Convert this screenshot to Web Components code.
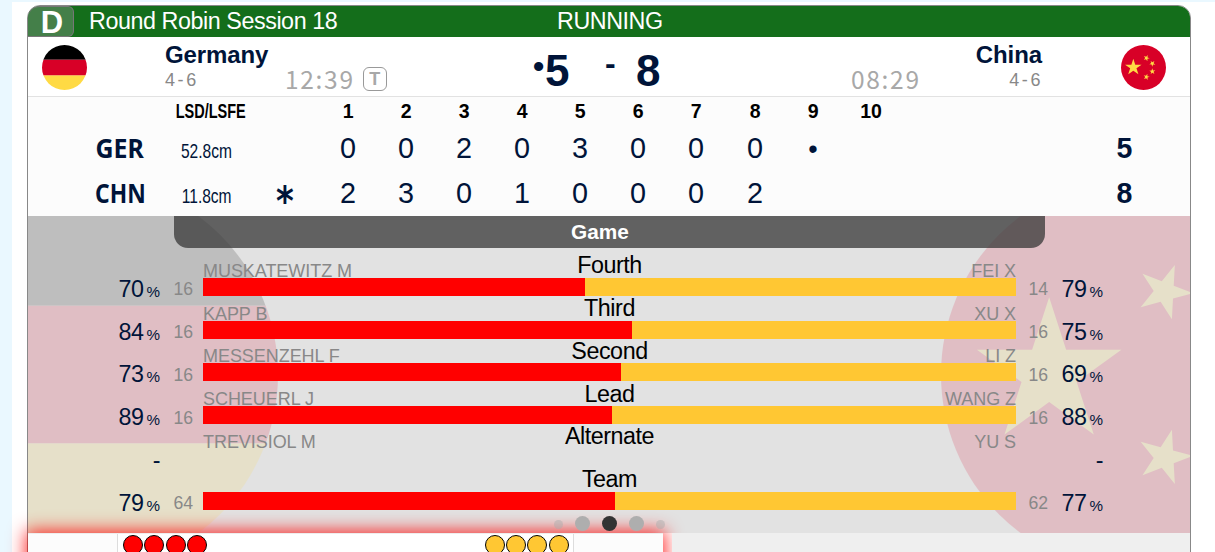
<!DOCTYPE html>
<html lang="en">
<head>
<meta charset="utf-8">
<title>Scoreboard</title>
<style>
  body { margin:0; height:552px; overflow:hidden; background:#eaf8ff; font-family:"Liberation Sans",Arial,sans-serif; color:#001439; }
</style>
</head>
<body>
<score-board>
  <session-bar slot="bar" sheet="D" state="RUNNING">Round Robin Session 18</session-bar>
  <match-head slot="head"></match-head>
  <line-score slot="ends"></line-score>
  <game-stats slot="stats"></game-stats>
  <stone-panel slot="stones"></stone-panel>
</score-board>
<script>
class BaseElement extends HTMLElement {
  constructor() {
    super();
    this.attachShadow({mode:"open"});
  }
  render(html) {
    const template = document.createElement('template');
    template.innerHTML = html;
    this.shadowRoot.replaceChildren(template.content.cloneNode(true));
  }
}

class ScoreBoard extends BaseElement {
  connectedCallback() {
    this.render(`
      <style>
        :host { display:block; padding:2px 0 0 12px; }
        .page { background:#fff; padding:3px 0 0 15px; height:547px; }
        .card { width:1162px; height:560px; border:1px solid #888; border-radius:13px 13px 0 0; background:#fff; }
      </style>
      <div class="page"><div class="card">
        <slot name="bar"></slot>
        <slot name="head"></slot>
        <slot name="ends"></slot>
        <slot name="stats"></slot>
        <slot name="stones"></slot>
      </div></div>`);
  }
}

class SessionBar extends BaseElement {
  connectedCallback() {
    this.render(`
      <style>
        :host { display:grid; grid-template-columns:46px 483px 1fr; height:31px; background:#146e1b;
          color:#fff; font-size:23.300px; letter-spacing:-.430px; line-height:30px; border-radius:12px 12px 0 0; }
        .sheet { box-sizing:border-box; height:31px; background:#447f49; border:1px solid #777; border-left:0; border-radius:12px 6px 6px 0;
          text-align:center; font-weight:bold; font-size:31px; letter-spacing:0; line-height:31px; padding-left:3px; }
        .name { padding-left:15px; }
      </style>
      <div class="sheet">${this.getAttribute("sheet")}</div>
      <div class="name"><slot></slot></div>
      <div>${this.getAttribute("state")}</div>`);
  }
}

class RoundFlag extends BaseElement {
  static shapes = {
    ger:`<path fill="#ffda44" d="M0 345h512v167H0z"/><path d="M0 0h512v167H0z"/><path fill="#d80027" d="M0 167h512v178H0z"/>`,
    chn:`<path fill="#d80027" d="M0 0h512v512H0z"/>
      <g fill="#ffda44">
        <path d="M140.2 155.8l22 68h71.6l-57.9 42 22.1 68-57.8-42-57.9 42 22.1-68-57.8-42h71.5z"/>
        <path d="M303.1 397.8l-16.9-20.8-25 9.6 14.5-22.5-16.9-20.8 25.9 6.9 14.6-22.5 1.4 26.8 25.9 6.9-25 9.7z"/>
        <path d="M303.1 114.2l-16.9 20.8-25-9.6 14.5 22.5-16.9 20.8 25.9-6.9 14.6 22.5 1.4-26.8 25.9-6.9-25-9.7z"/>
        <path d="M322.2 220.3L348.2 221.9 355.1 247 364.6 222.7 390.6 223.9 370.5 207.4 379.7 183 357.7 197 337.4 180.8 343.9 206z"/>
        <path d="M322.2 291.7L348.2 290.1 355.1 265 364.6 289.3 390.6 288.1 370.5 304.6 379.7 329 357.7 315 337.4 331.2 343.9 306z"/>
      </g>`
  }
  connectedCallback() {
    this.render(`
      <style>
        :host { display:block; }
        svg { display:block; width:100%; height:100%; border-radius:50%; }
      </style>
      <svg viewBox="0 0 512 512">${RoundFlag.shapes[this.getAttribute("team")]}</svg>`);
  }
}

class MatchHead extends BaseElement {
  connectedCallback() {
    this.render(`
      <style>
        :host { display:grid; grid-template-columns:137px 120px 229px 166px 170px 193px 1fr; height:59px; border-bottom:1px solid #e2e2e2; }
        round-flag { width:45px; height:45px; margin:8px 0 0 14px; }
        .right round-flag { margin-left:78px; }
        .name { font-weight:bold; font-size:24px; letter-spacing:-.1px; line-height:26px; padding-top:5px; white-space:nowrap; }
        .rec { font-size:18px; letter-spacing:2.600px; color:#888; line-height:20px; padding-top:2px; }
        .away { text-align:right; }
        .away .name { padding-right:1px; }
        .clock { display:flex; align-items:center; gap:8px; padding-top:26px; height:31px; font:24.500px/31px "Noto Sans CJK JP",sans-serif; letter-spacing:1.700px; color:#a8a8a8; }
        .clock i { box-sizing:border-box; width:24px; height:24px; border:1px solid #999; border-radius:6px; margin-top:1px;
          font:bold 18px/23px "Liberation Sans",sans-serif; letter-spacing:0; text-align:center; }
        .score { display:flex; padding-top:9px; font-weight:bold; font-size:44px; line-height:50px; }
        .score b:first-child { font-size:32px; line-height:40px; width:11px; }
        .score .five { width:60px; padding-left:1px; }
        .score .dash { width:31px; font-size:32px; line-height:34px; }
      </style>
      <div><round-flag team="ger"></round-flag></div>
      <div><div class="name">Germany</div><div class="rec">4-6</div></div>
      <div class="clock"><span>12:39</span><i>T</i></div>
      <div class="score" style="margin-left:19px"><b>•</b><b class="five">5</b><b class="dash">-</b><b>8</b></div>
      <div class="clock" style="padding-left:171px"><span>08:29</span></div>
      <div class="away"><div class="name">China</div><div class="rec">4-6</div></div>
      <div class="right"><round-flag team="chn"></round-flag></div>`);
  }
}

class LineScore extends BaseElement {
  connectedCallback() {
    const teams = [
      {code:"GER", fit:.94, lsd:"52.8cm", hammer:"", ends:["0","0","2","0","3","0","0","0","•",""], total:5},
      {code:"CHN", fit:.86, lsd:"11.8cm", hammer:"*", ends:["2","3","0","1","0","0","0","2","",""], total:8}
    ];
    const head = Array.from({length:10},(_,i)=>`<span>${i+1}</span>`).join("");
    const row = t => `
      <div class="row">
        <b class="code"><span style="transform:scaleX(${t.fit})">${t.code}</span></b>
        <span class="lsd"><span>${t.lsd}</span></span>
        <b class="ham">${t.hammer}</b><i></i>
        ${t.ends.map(e=>`<span class="end ${e == "•" ? "dot" : ""}">${e}</span>`).join("")}
        <b class="total"><span>${t.total}</span></b>
      </div>`;
    this.render(`
      <style>
        :host { display:block; height:119px; background:#fcfcfc; }
        .row { display:grid; grid-template-columns:122px 121px 28px 19.600px repeat(10,58.150px) 1fr;
          height:45px; line-height:44px; font-size:30px; text-align:center; }
        .row.head { height:29px; line-height:28px; font-size:21px; font-weight:bold; color:#000; }
        .row > * { min-width:0; white-space:nowrap; }
        .head b, .lsd { display:flex; justify-content:center; }
        .head b span { transform:scaleX(.69); }
        .head > span { transform:scaleX(.93); }
        .end { transform:scaleX(.96); }
        .code { padding-left:62px; font:bold 26.500px/44px "Noto Sans",sans-serif; }
        .code span { display:inline-block; }
        .lsd { font-size:21px; line-height:50px; padding-right:8px; }
        .lsd span { transform:scaleX(.74); }
        .ham { font:bold 40px/60px "DejaVu Sans",sans-serif; display:flex; justify-content:center; }
        .ham { transform:scaleX(.85); }
        .dot { font-size:28px; line-height:45px; }
        .total { text-align:left; padding-left:216px; }
        .total span { display:inline-block; transform:scaleX(.95); }
      </style>
      <div class="row head"><i></i><b><span>LSD/LSFE</span></b><i></i><i></i>${head}<i></i></div>
      ${teams.map(row).join("")}`);
  }
}

class StatRow extends BaseElement {
  connectedCallback() {
    const a = name => this.getAttribute(name) || "";
    const pct = v => v == "-" ? "<b>-</b>" : v ? `${v}<small>%</small>` : "";
    this.render(`
      <style>
        :host { display:grid; grid-template-columns:132px 33px 10px 813px 32px 55px 1fr; height:42.750px; }
        .pct, .num { text-align:right; white-space:nowrap; }
        .pct { font-size:23.300px; letter-spacing:-.5px; line-height:24px; padding-top:25px; }
        small { font-size:15.200px; letter-spacing:0; margin-left:3px; }
        b { font-weight:normal; }
        .num { font-size:17.6px; line-height:24px; padding-top:25.500px; color:#888; }
        .top { display:grid; grid-template-columns:1fr auto 1fr; height:26px; line-height:26px; font-size:18px; color:#888; }
        .top span { padding-top:6px; letter-spacing:-.050px; }
        .top span:last-child { text-align:right; }
        .top strong { font-weight:normal; font-size:23.300px; letter-spacing:-.450px; color:#000; padding-top:.5px; }
        .bar { display:flex; height:18px; background:#ffc733; }
        .bar i { background:#f00; width:${a("share")}px; }
      </style>
      <div class="pct">${pct(a("left"))}</div><div class="num">${a("ln")}</div><i></i>
      <div>
        <div class="top"><span>${a("home")}</span><strong><slot></slot></strong><span>${a("away")}</span></div>
        ${a("share") ? `<div class="bar"><i></i></div>` : ""}
      </div>
      <div class="num">${a("rn")}</div><div class="pct">${pct(a("right"))}</div><i></i>`);
  }
}

class GameStats extends BaseElement {
  connectedCallback() {
    this.render(`
      <style>
        :host { display:block; position:relative; height:317px; background:#e2e2e2; }
        .back { position:absolute; inset:0; overflow:hidden; opacity:.152; }
        .back round-flag { position:absolute; width:395px; height:395px; top:-39px; }
        .main { position:relative; }
        .tab { margin-left:146px; width:852px; height:32px; padding-right:19px; border-radius:0 0 14px 14px; background:rgba(58,58,58,.77);
          color:#fff; font-weight:bold; font-size:20.800px; line-height:31px; text-align:center; }
        .rows { padding-top:3.900px; }
        .dots { position:absolute; z-index:3; left:525.500px; top:300px; display:flex; align-items:center; gap:12px; }
        .dots i { width:15px; height:15px; border-radius:50%; background:#aeaeae; }
        .dots i.on { background:#333; }
        .dots i.s { width:9px; height:9px; background:rgba(174,174,174,.5); margin-top:2px; }
      </style>
      <div class="back"><round-flag team="ger" style="left:-145px"></round-flag><round-flag team="chn" style="left:913px"></round-flag></div>
      <div class="main">
        <div class="tab">Game</div>
        <div class="rows">
          <stat-row left="70" ln="16" home="MUSKATEWITZ M" away="FEI X" rn="14" right="79" share="382">Fourth</stat-row>
          <stat-row left="84" ln="16" home="KAPP B" away="XU X" rn="16" right="75" share="429">Third</stat-row>
          <stat-row left="73" ln="16" home="MESSENZEHL F" away="LI Z" rn="16" right="69" share="418">Second</stat-row>
          <stat-row left="89" ln="16" home="SCHEUERL J" away="WANG Z" rn="16" right="88" share="409">Lead</stat-row>
          <stat-row left="-" home="TREVISIOL M" away="YU S" right="-">Alternate</stat-row>
          <stat-row left="79" ln="64" rn="62" right="77" share="412">Team</stat-row>
        </div>
      </div>
      <div class="dots"><i class="s"></i><i></i><i class="on"></i><i></i><i class="s"></i></div>`);
  }
}

class StonePanel extends BaseElement {
  connectedCallback() {
    const stones = "<i></i>".repeat(4);
    this.render(`
      <style>
        :host { display:flex; height:40px; }
        .panel { position:relative; z-index:1; box-sizing:border-box; width:635px; display:grid; grid-template-columns:89px 457px 1fr;
          background:#fcfcfc; border-top:1px solid #eee; box-shadow:0 0 18px 2px rgba(255,0,0,.85); }
        .ice { background:#fff; border:solid #ddd; border-width:0 1px; display:flex; justify-content:space-between; padding:1px 4.500px 0 5px; }
        .set { display:flex; gap:1.300px; }
        i { box-sizing:border-box; width:20px; height:20px; border:1.500px solid #000; border-radius:50%; background:var(--stone); }
        .rest { position:relative; z-index:2; flex:1; margin-left:9px; background:#efefef; }
      </style>
      <div class="panel"><div></div>
        <div class="ice"><div class="set" style="--stone:#f00">${stones}</div><div class="set" style="--stone:#ffc733">${stones}</div></div>
      </div>
      <div class="rest"></div>`);
  }
}

customElements.define('round-flag',RoundFlag);
customElements.define('stat-row',StatRow);
customElements.define('session-bar',SessionBar);
customElements.define('match-head',MatchHead);
customElements.define('line-score',LineScore);
customElements.define('game-stats',GameStats);
customElements.define('stone-panel',StonePanel);
customElements.define('score-board',ScoreBoard);
</script>
</body>
</html>
